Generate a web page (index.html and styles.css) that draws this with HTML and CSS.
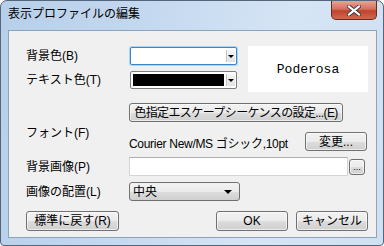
FILE: index.html
```html
<!DOCTYPE html>
<html lang="ja">
<head>
  <meta charset="UTF-8" />
  <title>表示プロファイルの編集</title>
  <link rel="stylesheet" href="styles.css">
</head>
<body>

  <div class="window">
    <div class="titlebar">
      <span class="title">表示プロファイルの編集</span>
      <span class="close">
        <svg width="14" height="11" viewBox="0 0 14 11">
          <path d="M2 1.5 L12 9.5 M12 1.5 L2 9.5" stroke="#3a3a3a" stroke-width="4" stroke-linecap="square"/>
          <path d="M2 1.5 L12 9.5 M12 1.5 L2 9.5" stroke="#ffffff" stroke-width="2.2" stroke-linecap="square"/>
        </svg>
      </span>
    </div>

    <div class="client">
      <!-- 色の設定 + プレビュー -->
      <div class="colors-row">
        <div class="color-fields">
          <div class="field">
            <label>背景色(B)</label>
            <div class="combo focus">
              <span class="swatch"></span>
              <span class="drop"><i class="tri"></i></span>
            </div>
          </div>
          <div class="field">
            <label>テキスト色(T)</label>
            <div class="combo">
              <span class="swatch black"></span>
              <span class="drop"><i class="tri"></i></span>
            </div>
          </div>
        </div>
        <div class="preview">Poderosa</div>
      </div>

      <div class="field esc-row">
        <label></label>
        <button class="btn esc">色指定エスケープシーケンスの設定...(E)</button>
      </div>

      <div class="font-row">
        <label>フォント(F)</label>
        <div class="font-value">
          <span class="font-name">Courier New/MS ゴシック,10pt</span>
          <button class="btn change">変更...</button>
        </div>
      </div>

      <div class="field image-row">
        <label>背景画像(P)</label>
        <input class="text" type="text">
        <button class="btn browse">...</button>
      </div>

      <div class="field image-row">
        <label>画像の配置(L)</label>
        <div class="select">中央<i class="tri"></i></div>
      </div>

      <div class="footer">
        <button class="btn reset">標準に戻す(R)</button>
        <button class="btn ok">OK</button>
        <button class="btn cancel">キャンセル</button>
      </div>
    </div>
  </div>

</body>
</html>
```

FILE: styles.css
```css
body {
  margin: 0;
  padding: 0;
  background: #ffffff;
  font-family: "Liberation Sans", "Noto Sans CJK JP", sans-serif;
  font-size: 12px;
  color: #000;
}

.window {
  width: 384px;
  height: 246px;
  box-sizing: border-box;
  border: 1px solid #55657a;
  border-radius: 7px 7px 4px 4px;
  background: linear-gradient(100deg, #b7cfea 0%, #c4d8ef 35%, #d6e5f5 70%, #cfe0f2 100%);
  display: flex;
  flex-direction: column;
  overflow: hidden;
}

.titlebar {
  height: 29px;
  display: flex;
  justify-content: space-between;
  align-items: flex-start;
  padding-left: 7px;
  flex-shrink: 0;
}

.title {
  margin-top: 5px;
  line-height: 16px;
  font-size: 12px;
  color: #000;
}

.close {
  width: 46px;
  height: 19px;
  margin-right: 6px;
  box-sizing: border-box;
  border: 1px solid #6b2a20;
  border-top: none;
  border-radius: 0 0 5px 5px;
  background: linear-gradient(#e6a595 0%, #d46f5c 45%, #c0432c 55%, #cf6a4f 100%);
  display: flex;
  align-items: center;
  justify-content: center;
}

.client {
  flex: 1;
  margin: 0 6px 7px 7px;
  border: 1px solid #8da2bb;
  background: #f0f0f0;
  padding: 15px 8px 0 17px;
  display: flex;
  flex-direction: column;
}

.field {
  display: flex;
  align-items: center;
}

.field label,
.font-row label {
  width: 103px;
  flex-shrink: 0;
  line-height: 14px;
}

/* 色 */
.colors-row {
  display: flex;
  height: 46px;
}

.color-fields {
  display: flex;
  flex-direction: column;
  gap: 6px;
  padding-top: 1px;
}

.combo {
  width: 107px;
  height: 18px;
  margin-left: 1px;
  box-sizing: border-box;
  border: 1px solid #7d7d7d;
  border-radius: 2px;
  background: #fff;
  padding: 2px 1px 2px 2px;
  display: flex;
}

.combo.focus {
  border-color: #3c86c8;
  box-shadow: 0 0 0 1px #a6d5f5;
}

.swatch {
  flex: 1;
  background: #fff;
}

.swatch.black {
  background: #000;
}

.drop {
  width: 8px;
  margin-left: 2px;
  border-left: 1px solid #c3c3c3;
  background: linear-gradient(#f6f6f6, #e3e3e3);
  display: flex;
  align-items: center;
  justify-content: center;
}

.tri {
  display: block;
  width: 0;
  height: 0;
  border-left: 3px solid transparent;
  border-right: 3px solid transparent;
  border-top: 3px solid #000;
}

.preview {
  width: 120px;
  height: 46px;
  margin-left: auto;
  background: #fff;
  font-family: "Liberation Mono", monospace;
  font-size: 13px;
  display: flex;
  align-items: center;
  justify-content: center;
}

/* ボタン */
.btn {
  font-family: inherit;
  font-size: 12px;
  color: #000;
  box-sizing: border-box;
  border: 1px solid #707070;
  border-radius: 3px;
  background: linear-gradient(#f2f2f2 0%, #ebebeb 50%, #dddddd 51%, #cfcfcf 100%);
  box-shadow: inset 0 0 0 1px rgba(255,255,255,0.6);
  padding: 0;
  line-height: 14px;
  white-space: nowrap;
}

.esc-row {
  margin-top: 11px;
}

.esc {
  width: 214px;
  height: 19px;
  letter-spacing: -0.6px;
}

.font-row {
  display: flex;
  align-items: flex-start;
  margin-top: 4px;
}

.font-value {
  flex: 1;
  display: flex;
  align-items: center;
  margin-top: 6px;
}

.font-name {
  margin-top: 1px;
  letter-spacing: -0.3px;
}

.change {
  width: 62px;
  height: 19px;
  margin-left: auto;
  margin-right: 1px;
}

.image-row {
  margin-top: 6px;
}

.text {
  width: 219px;
  height: 19px;
  box-sizing: border-box;
  border: 1px solid #d2d6dc;
  border-top-color: #abadb3;
  background: #fff;
  margin: 0;
}

.browse {
  width: 16px;
  height: 16px;
  margin-left: 1px;
  font-size: 9px;
  line-height: 10px;
}

.select {
  width: 111px;
  height: 19px;
  box-sizing: border-box;
  border: 1px solid #707070;
  border-radius: 3px;
  background: linear-gradient(#f2f2f2 0%, #ebebeb 50%, #dddddd 51%, #cfcfcf 100%);
  padding: 0 7px 0 3px;
  display: flex;
  align-items: center;
  justify-content: space-between;
  line-height: 14px;
}

.select .tri {
  border-left-width: 4px;
  border-right-width: 4px;
  border-top-width: 4px;
}

.footer {
  display: flex;
  gap: 8px;
  margin-top: 10px;
}

.footer .btn {
  height: 20px;
}

.reset {
  width: 93px;
  margin-right: auto;
}

.ok,
.cancel {
  width: 72px;
}
```
